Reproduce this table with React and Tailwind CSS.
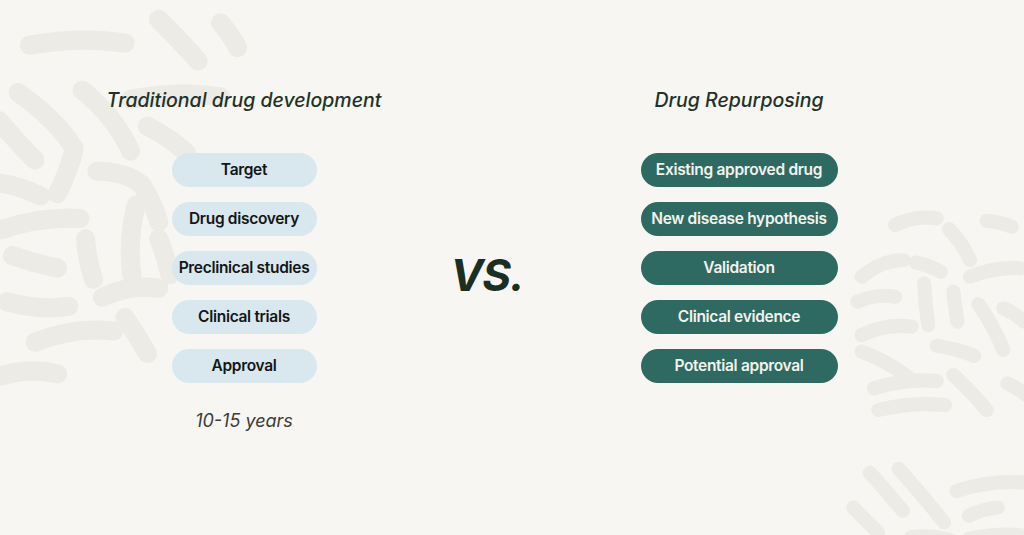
import React from "react";

const traditional = ["Target", "Drug discovery", "Preclinical studies", "Clinical trials", "Approval"];
const repurposing = [
  "Existing approved drug",
  "New disease hypothesis",
  "Validation",
  "Clinical evidence",
  "Potential approval",
];

// soft coral-like squiggles in the background
function Squiggles({ className, paths, w = 240, h = 340 }) {
  return (
    <svg className={className} viewBox={`0 0 ${w} ${h}`} fill="none">
      {paths.map((d, i) => (
        <path key={i} d={d} stroke="#ecebe6" strokeWidth="17" strokeLinecap="round" strokeLinejoin="round" />
      ))}
    </svg>
  );
}

const leftPaths = [
  "M35 28 Q80 20 120 26",
  "M150 5 Q170 25 185 42",
  "M205 8 Q215 20 220 30",
  "M25 70 Q60 95 75 120 Q70 140 60 160",
  "M82 68 Q110 90 125 122",
  "M125 76 Q170 68 205 74",
  "M8 95 Q25 115 40 130",
  "M140 100 Q160 110 175 124",
  "M5 150 Q25 152 45 162",
  "M95 140 Q120 140 135 152 Q145 168 150 185",
  "M10 192 Q45 180 80 182",
  "M130 170 Q122 200 126 232",
  "M85 200 Q86 218 92 236",
  "M20 215 Q40 222 60 226",
  "M100 252 Q125 240 150 244",
  "M15 256 Q45 264 70 260",
  "M150 200 Q156 215 160 232",
  "M40 292 Q75 278 110 282",
  "M120 270 Q130 285 140 302",
  "M10 322 Q35 314 60 320",
];

const rightPaths = [
  "M60 20 Q85 8 110 12",
  "M125 25 Q140 40 150 62",
  "M170 15 Q185 16 200 22",
  "M20 82 Q45 62 70 62",
  "M85 65 Q100 68 115 76",
  "M150 82 Q180 70 210 72",
  "M15 112 Q38 102 60 106",
  "M95 90 Q96 115 100 140",
  "M130 100 Q132 118 135 136",
  "M160 115 Q178 140 190 170",
  "M20 152 Q50 138 80 142",
  "M20 172 Q48 182 75 202",
  "M110 165 Q132 168 155 177",
  "M190 120 Q204 126 215 136",
  "M35 216 Q72 204 110 207",
  "M130 200 Q150 218 170 242",
  "M40 242 Q80 232 120 236",
  "M195 210 Q208 216 220 226",
];

const bottomPaths = [
  "M30 20 Q50 42 70 66",
  "M65 15 Q92 45 120 80",
  "M135 42 Q178 28 220 32",
  "M10 62 Q25 78 40 92",
  "M150 72 Q165 64 185 62",
  "M80 98 Q105 94 130 102",
  "M150 100 Q185 92 215 96",
];

function Pill({ label, dark }) {
  return (
    <div
      className={
        dark
          ? "flex h-[34px] w-[197px] items-center justify-center rounded-full bg-[#2e6a61] text-[15.5px] font-semibold tracking-[-0.02em] text-[#f3f3ee]"
          : "flex h-[34px] w-[145px] items-center justify-center rounded-full bg-[#d9e7ef] text-[15.5px] font-semibold tracking-[-0.02em] text-[#131614]"
      }
    >
      {label}
    </div>
  );
}

export default function App() {
  return (
    <div className="relative h-[535px] w-[1024px] overflow-hidden bg-[#f7f6f2] font-['Inter',sans-serif]">
      <Squiggles className="absolute -left-[10px] -top-[5px] h-[420px] w-[270px]" paths={leftPaths} />
      <Squiggles className="absolute left-[845px] top-[200px] h-[300px] w-[200px]" paths={rightPaths} />
      <Squiggles className="absolute left-[845px] top-[445px] h-[130px] w-[190px]" paths={bottomPaths} w={230} h={130} />

      <div className="relative flex pl-[44px] pt-[87px]">
        <div className="flex w-[400px] flex-col items-center">
          <h2 className="h-[26px] text-[19.5px] font-medium italic leading-[26px] text-[#1e3328]">
            Traditional drug development
          </h2>
          <div className="mt-[40px] flex flex-col items-center gap-[15px]">
            {traditional.map((t) => (
              <Pill key={t} label={t} />
            ))}
          </div>
          <p className="mt-[24px] text-[18px] italic text-[#3a3d3b]">10-15 years</p>
        </div>

        <div className="flex w-[86px] justify-center pt-[166px]">
          <span className="text-[44px] font-bold italic leading-none tracking-tight text-[#1b2e24]">VS.</span>
        </div>

        <div className="ml-[9px] flex w-[400px] flex-col items-center">
          <h2 className="h-[26px] text-[19.5px] font-medium italic leading-[26px] text-[#1e3328]">
            Drug Repurposing
          </h2>
          <div className="mt-[40px] flex flex-col items-center gap-[15px]">
            {repurposing.map((t) => (
              <Pill key={t} label={t} dark />
            ))}
          </div>
        </div>
      </div>
    </div>
  );
}
